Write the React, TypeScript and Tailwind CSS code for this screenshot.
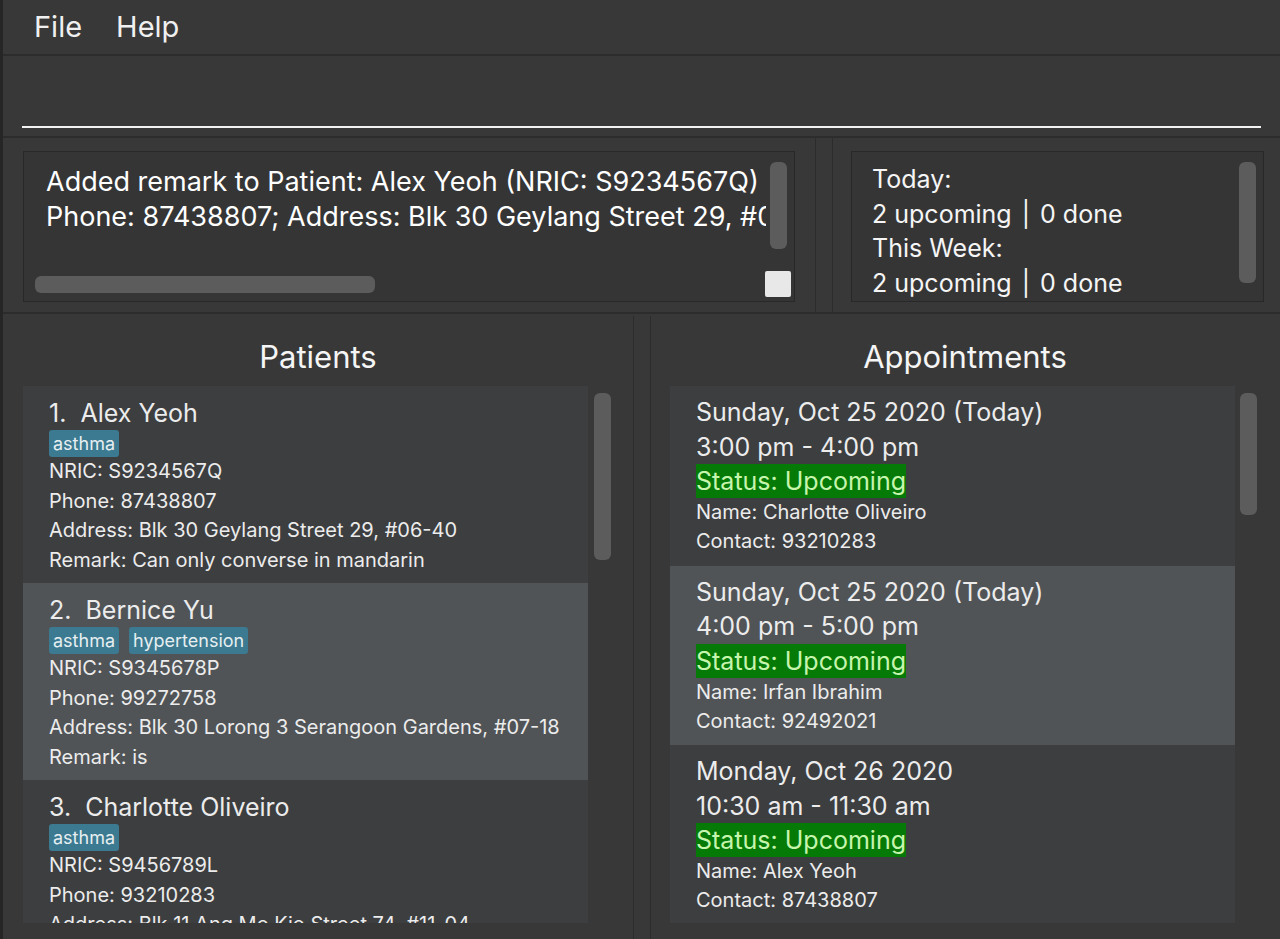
import React from 'react';

type Patient = {
  index: number;
  name: string;
  tags: string[];
  nric: string;
  phone: string;
  address: string;
  remark: string;
  selected?: boolean;
};

type Appointment = {
  date: string;
  time: string;
  name: string;
  contact: string;
  selected?: boolean;
};

const patients: Patient[] = [
  { index: 1, name: 'Alex Yeoh', tags: ['asthma'], nric: 'S9234567Q', phone: '87438807', address: 'Blk 30 Geylang Street 29, #06-40', remark: 'Can only converse in mandarin' },
  { index: 2, name: 'Bernice Yu', tags: ['asthma', 'hypertension'], nric: 'S9345678P', phone: '99272758', address: 'Blk 30 Lorong 3 Serangoon Gardens, #07-18', remark: 'is', selected: true },
  { index: 3, name: 'Charlotte Oliveiro', tags: ['asthma'], nric: 'S9456789L', phone: '93210283', address: 'Blk 11 Ang Mo Kio Street 74, #11-04', remark: 'Prefers morning slots' },
];

const appointments: Appointment[] = [
  { date: 'Sunday, Oct 25 2020 (Today)', time: '3:00 pm - 4:00 pm', name: 'Charlotte Oliveiro', contact: '93210283' },
  { date: 'Sunday, Oct 25 2020 (Today)', time: '4:00 pm - 5:00 pm', name: 'Irfan Ibrahim', contact: '92492021', selected: true },
  { date: 'Monday, Oct 26 2020', time: '10:30 am - 11:30 am', name: 'Alex Yeoh', contact: '87438807' },
];

function PatientCard({ p }: { p: Patient }) {
  return (
    <div className={`h-[197px] shrink-0 pl-[26px] pt-[12px] text-[#ececec] ${p.selected ? 'bg-[#505457]' : 'bg-[#3c3e40]'}`}>
      <div className="h-[30px] text-[25px] leading-[30px] whitespace-pre">{`${p.index}.  ${p.name}`}</div>
      <div className="mt-[2px] flex gap-[10px] h-[27px]">
        {p.tags.map((t) => (
          <span key={t} className="h-[27px] px-[4px] rounded-[3px] bg-[#3b7a90] text-[18px] leading-[27px] text-[#e6eef1]">
            {t}
          </span>
        ))}
      </div>
      <div className="text-[20px] leading-[29.5px]">
        <div>NRIC: {p.nric}</div>
        <div>Phone: {p.phone}</div>
        <div>Address: {p.address}</div>
        <div>Remark: {p.remark}</div>
      </div>
    </div>
  );
}

function AppointmentCard({ a }: { a: Appointment }) {
  return (
    <div className={`h-[179.5px] shrink-0 pl-[26px] pt-[9px] text-[#ececec] ${a.selected ? 'bg-[#505457]' : 'bg-[#3c3e40]'}`}>
      <div className="text-[25px] leading-[34.5px]">{a.date}</div>
      <div className="text-[25px] leading-[34.5px]">{a.time}</div>
      <div className="flex">
        <span className="bg-[#067a06] text-[#c6f5ae] text-[25px] leading-[34px]">Status: Upcoming</span>
      </div>
      <div className="text-[20px] leading-[29px]">Name: {a.name}</div>
      <div className="text-[20px] leading-[29px]">Contact: {a.contact}</div>
    </div>
  );
}

function VScroll({ h }: { h: string }) {
  return <div className={`w-[17px] rounded-[6px] bg-[#5c5c5c] ${h}`} />;
}

function StatLine() {
  return (
    <div>
      2 upcoming<span className="mx-[10px]">|</span>0 done
    </div>
  );
}

export default function App() {
  return (
    <div
      className="w-[1280px] h-[939px] overflow-hidden bg-[#383838] flex flex-col border-l-[3px] border-[#262626] text-white"
      style={{ fontFamily: 'Inter, "Open Sans", sans-serif' }}
    >
      {/* Menu bar */}
      <div className="h-[56px] shrink-0 flex items-center gap-[34px] pl-[31px] border-b-2 border-[#2c2c2c] text-[29px] text-[#f0f0f0]">
        <span>File</span>
        <span>Help</span>
      </div>

      {/* Command box */}
      <div className="h-[82px] shrink-0 px-[19px] pt-[70px] border-b-2 border-[#2c2c2c]">
        <div className="h-[2px] bg-[#f2f2f2]" />
      </div>

      {/* Result + stats */}
      <div className="h-[176px] shrink-0 flex border-b-2 border-[#2c2c2c]">
        <div className="w-[812px] shrink-0 px-[20px] pt-[13px] pb-[10px]">
          <div className="relative h-full bg-[#353535] border border-[#282828] overflow-hidden">
            <div className="absolute left-[22px] top-[12px] w-[720px] overflow-hidden text-[27px] leading-[35px] whitespace-nowrap">
              <div>Added remark to Patient: Alex Yeoh (NRIC: S9234567Q)</div>
              <div>Phone: 87438807; Address: Blk 30 Geylang Street 29, #06-40; Remark: Can only converse in mandarin</div>
            </div>
            <div className="absolute left-[746px] top-[10px] w-[17px] h-[87px] rounded-[6px] bg-[#5c5c5c]" />
            <div className="absolute left-[11px] top-[124px] w-[340px] h-[17px] rounded-[6px] bg-[#5c5c5c]" />
            <div className="absolute left-[741px] top-[119px] w-[26px] h-[26px] rounded-[2px] bg-[#e8e8e8]" />
          </div>
        </div>
        <div className="w-[18px] shrink-0 border-x border-[#2c2c2c]" />
        <div className="flex-1 pl-[18px] pr-[16px] pt-[13px] pb-[10px]">
          <div className="relative h-full bg-[#353535] border border-[#282828] flex">
            <div className="flex-1 pl-[20px] pt-[10px] text-[25px] leading-[34.5px] text-[#f5f5f5]">
              <div>Today:</div>
              <StatLine />
              <div>This Week:</div>
              <StatLine />
            </div>
            <div className="pt-[10px] pr-[7px]">
              <VScroll h="h-[121px]" />
            </div>
          </div>
        </div>
      </div>

      {/* Lists */}
      <div className="flex-1 flex min-h-0 pt-[2px]">
        <div className="w-[630px] shrink-0 flex flex-col pl-[20px] pr-[20px]">
          <div className="h-[70px] shrink-0 pt-[12px] flex items-center justify-center text-[31px] text-[#f5f5f5]">Patients</div>
          <div className="h-[537px] flex gap-[6px] overflow-hidden">
            <div className="w-[565px] shrink-0 flex flex-col overflow-hidden">
              {patients.map((p) => (
                <PatientCard key={p.index} p={p} />
              ))}
            </div>
            <div className="pt-[7px]">
              <VScroll h="h-[167px]" />
            </div>
          </div>
        </div>
        <div className="w-[18px] shrink-0 border-x border-[#2c2c2c]" />
        <div className="flex-1 flex flex-col pl-[19px] pr-[20px]">
          <div className="h-[70px] shrink-0 pt-[12px] flex items-center justify-center text-[31px] text-[#f5f5f5]">Appointments</div>
          <div className="h-[537px] flex gap-[5px] overflow-hidden">
            <div className="w-[565px] shrink-0 flex flex-col overflow-hidden">
              {appointments.map((a, i) => (
                <AppointmentCard key={i} a={a} />
              ))}
            </div>
            <div className="pt-[7px]">
              <VScroll h="h-[122px]" />
            </div>
          </div>
        </div>
      </div>
    </div>
  );
}
